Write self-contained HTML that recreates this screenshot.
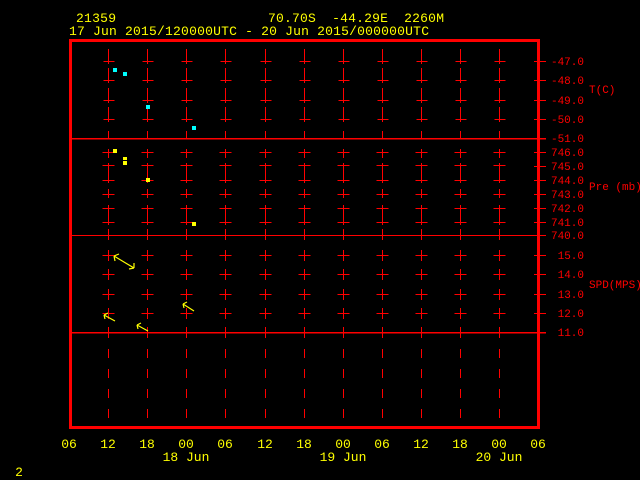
<!DOCTYPE html>
<html><head><meta charset="utf-8"><style>
html,body{margin:0;padding:0;background:#000;width:640px;height:480px;overflow:hidden}
svg{display:block}
text{font-family:"Liberation Mono","DejaVu Sans Mono",monospace}
</style></head><body>
<svg id="s" width="640" height="480" xmlns="http://www.w3.org/2000/svg">
<g fill="#ffff00" font-size="13">
<text x="76" y="22" textLength="40">21359</text>
<text x="268" y="22" textLength="176" xml:space="preserve">70.70S  -44.29E  2260M</text>
<text x="69" y="35" textLength="360">17 Jun 2015/120000UTC - 20 Jun 2015/000000UTC</text>
</g>
<g fill="#ffff00" font-size="13" text-anchor="middle">
<text x="69" y="448">06</text><text x="108" y="448">12</text><text x="147" y="448">18</text><text x="186" y="448">00</text><text x="225" y="448">06</text><text x="265" y="448">12</text><text x="304" y="448">18</text><text x="343" y="448">00</text><text x="382" y="448">06</text><text x="421" y="448">12</text><text x="460" y="448">18</text><text x="499" y="448">00</text><text x="538" y="448">06</text>
<text x="186" y="461">18 Jun</text><text x="343" y="461">19 Jun</text><text x="499" y="461">20 Jun</text>
<text x="19" y="476">2</text>
</g>
<g fill="#ff0000" font-size="11" id="lab"></g>
<g fill="#ff0000" font-size="11">
<text x="589" y="93">T(C)</text>
<text x="589" y="190">Pre (mb)</text>
<text x="589" y="288">SPD(MPS)</text>
</g>
<g id="g" stroke="#ff0000" stroke-width="1" shape-rendering="crispEdges"></g>
<rect x="70.5" y="40.5" width="468" height="387" fill="none" stroke="#ff0000" stroke-width="3" shape-rendering="crispEdges"/>
<g fill="#00ffff"><rect x="113" y="68" width="4" height="4"/><rect x="123" y="72" width="4" height="4"/><rect x="146" y="105" width="4" height="4"/><rect x="192" y="126" width="4" height="4"/></g>
<g fill="#ffff00"><rect x="113" y="149" width="4" height="4"/><rect x="123" y="157" width="4" height="3"/><rect x="123" y="161" width="4" height="4"/><rect x="146" y="178" width="4" height="4"/><rect x="192" y="222" width="4" height="4"/></g>
<g stroke="#ffff00" stroke-width="1.2" fill="none">
<path d="M114 256L134 268M114 256l5 -2M114 256l1 5M134 268l-5 1M134 268l0 -5"/>
<path d="M104 315L115 321M104 315l4 -2M104 315l1 4"/>
<path d="M137 325L148 331M137 325l4 -2M137 325l1 4"/>
<path d="M183 304L194 311M183 304l4 -2M183 304l1 4"/>
</g>
</svg>
<script>
var g=document.getElementById('g'),lab=document.getElementById('lab'),NS='http://www.w3.org/2000/svg';
function L(x1,y1,x2,y2,w){var e=document.createElementNS(NS,'line');e.setAttribute('x1',x1);e.setAttribute('y1',y1);e.setAttribute('x2',x2);e.setAttribute('y2',y2);if(w)e.setAttribute('stroke-width',w);g.appendChild(e);}
function T(x,y,s){var e=document.createElementNS(NS,'text');e.setAttribute('x',x);e.setAttribute('y',y+4);e.setAttribute('text-anchor','end');e.textContent=s;lab.appendChild(e);}
var cols=[108.5,147.5,186.5,225.5,265.5,304.5,343.5,382.5,421.5,460.5,499.5];
L(71,138.5,546,138.5,1.5);L(71,235.5,546,235.5);L(71,332.5,546,332.5,1.5);
var tY=[61,80,100,119],pY=[152,165,180,194,208,222],sY=[255,274,294,313];
cols.forEach(function(x){
 tY.forEach(function(y){L(x,y-12,x,y+3);L(x-5,y+0.5,x+6,y+0.5);});
 L(x,131,x,138);
 L(x,149,x,158);L(x,163,x,183);L(x,189,x,198);L(x,205,x,225);L(x,229,x,240);
 pY.forEach(function(y){L(x-6,y+0.5,x+6,y+0.5);});
 sY.forEach(function(y){L(x,y-5,x,y+6);L(x-6,y+0.5,x+6,y+0.5);});
 L(x,327,x,338);
 [349,369,389,409].forEach(function(y){L(x,y,x,y+9);});
});
var r=[[61,'-47.0'],[80,'-48.0'],[100,'-49.0'],[119,'-50.0'],[138,'-51.0'],[152,'746.0'],[166,'745.0'],[180,'744.0'],[194,'743.0'],[208,'742.0'],[222,'741.0'],[235,'740.0'],[255,'15.0'],[274,'14.0'],[294,'13.0'],[313,'12.0'],[332,'11.0']];
r.forEach(function(a){L(534,a[0]+0.5,546,a[0]+0.5);T(584,a[0],a[1]);});
</script>
</body></html>
